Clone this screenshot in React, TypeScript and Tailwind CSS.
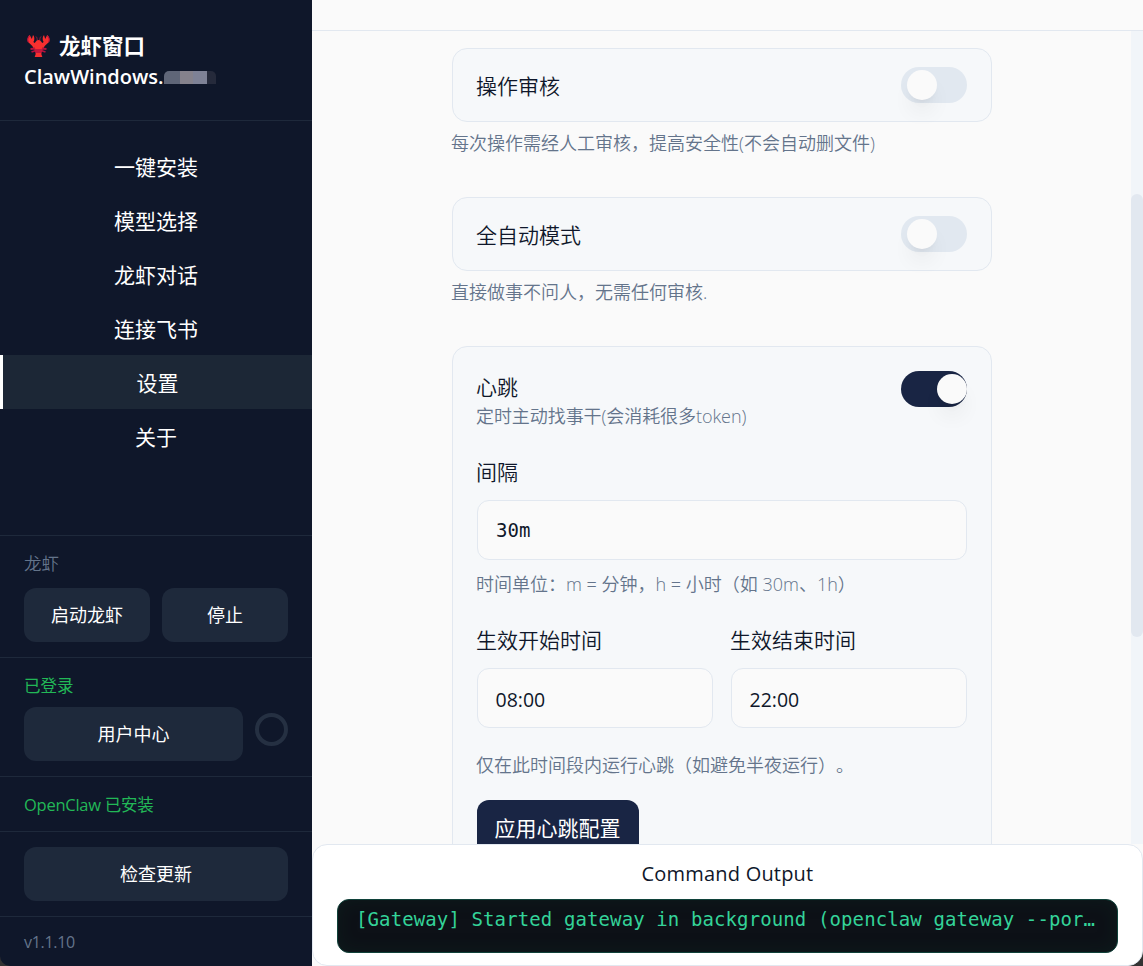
import React from 'react';

const SANS = "font-['Open_Sans','Noto_Sans_CJK_SC',sans-serif]";
const MONO = "font-['DejaVu_Sans_Mono',monospace]";

const navItems = ['一键安装', '模型选择', '龙虾对话', '连接飞书', '设置', '关于'];
const activeItem = '设置';

function Lobster() {
  return (
    <svg viewBox="0 0 24 24" className="h-[24px] w-[24px] shrink-0" fill="none">
      <path d="M10.300 8C10.300 5 10 3 9 2.500M12.700 8C12.700 5 13 3 14 2.500" stroke="#8f1d3c" strokeWidth="1" />
      <path d="M3.500 15l5-.500M19.500 15l-5-.500M4.500 18l4.500-1.500M18.500 18l-4.500-1.500" stroke="#b5123f" strokeWidth="1.800" />
      <path d="M2.800 1C.5 2.500-.3 6.500 1.500 8.500c1.500 1.500 3.500 2.500 5 5.500l3-3.500C8.500 9 7 9 6.400 8 7.800 6 7.600 2.500 6 1L4.800 5z" fill="#f92f2f" />
      <path d="M20.200 1c2.300 1.500 3.100 5.500 1.300 7.500-1.500 1.500-3.500 2.500-5 5.500l-3-3.500c1-1.500 2.500-1.500 3.100-2.500C15.200 6 15.400 2.500 17 1l1.200 4z" fill="#f92f2f" />
      <path d="M2.600 1.800C.7 3.500.2 6.500 1.500 8.200M20.400 1.800c1.900 1.700 2.400 4.700 1.100 6.400" stroke="#b5123f" strokeWidth="1.100" />
      <path d="M11.500 6c2.200 0 4.500 3.200 4.500 6.500 0 2-2 3.500-4.500 3.500S7 14.500 7 12.500C7 9.200 9.300 6 11.500 6z" fill="#f92f2f" />
      <path d="M7.200 15h8.600l-1.500 5H8.700z" fill="#c4173c" />
      <path d="M9 19h5l1.300 4H7.700z" fill="#f92f2f" />
    </svg>
  );
}

function SideButton({ children, className = '' }: { children: React.ReactNode; className?: string }) {
  return (
    <button className={`flex h-[54px] items-center justify-center rounded-[12px] bg-[#1e293b] text-[18px] text-white ${className}`}>
      {children}
    </button>
  );
}

function Toggle({ on = false }: { on?: boolean }) {
  return (
    <span className={`flex h-9 w-[66px] shrink-0 items-center rounded-full ${on ? 'justify-end bg-[#192544]' : 'bg-[#e1e8f0] pl-[6px]'}`}>
      <span className="h-[30px] w-[30px] rounded-full bg-[#fafafa] shadow-[0_15px_22px_-4px_rgba(0,0,0,0.07),0_6px_9px_-6px_rgba(0,0,0,0.1)]" />
    </span>
  );
}

function ToggleCard({ title }: { title: string }) {
  return (
    <div className="flex h-[74px] shrink-0 items-center justify-between rounded-[15px] border border-[#e2e8f0] bg-[#f6f8fa] pl-[23px] pr-6">
      <span className="pt-[3px] text-[21px] font-[350]">{title}</span>
      <Toggle />
    </div>
  );
}

function Field({ value, className = '' }: { value: string; className?: string }) {
  return (
    <div className={`flex h-[60px] items-center rounded-[12px] border border-[#e2e8f0] bg-[#fafafa] px-[18px] ${className}`}>
      {value}
    </div>
  );
}

function Sidebar() {
  return (
    <aside className="flex w-[312px] shrink-0 flex-col rounded-bl-[10px] bg-[#0f172a] text-white">
      <div className="h-[121px] border-b border-[#1e293b] px-6 pt-[31px] font-semibold leading-[30px]">
        <div className="flex items-center">
          <span className="flex w-[35px] pl-[3px]"><Lobster /></span>
          <span className="text-[21.500px] font-bold">龙虾窗口</span>
        </div>
        <div className="flex items-center">
          <span className="pt-px text-[20px]">ClawWindows.</span>
          <span className="mt-px flex h-[13px] w-[52px] overflow-hidden rounded-t-[5px]">
            <span className="w-[16px] bg-[#5f6678]" />
            <span className="w-[13px] bg-[#85828c]" />
            <span className="w-[14px] bg-[#7e8296]" />
            <span className="w-[9px] bg-[#252a3b]" />
          </span>
        </div>
      </div>
      <nav className="flex h-[414px] flex-col pt-[18px] text-[21px]">
        {navItems.map((item) => (
          <a
            key={item}
            className={`flex h-[54px] items-center justify-center pt-[3px] ${item === activeItem ? 'border-l-[3px] border-white bg-[#1c2736]' : ''}`}
          >
            {item}
          </a>
        ))}
      </nav>
      <section className="h-[122px] border-t border-[#1e293b] px-6 pt-[14px]">
        <div className="h-[38px] text-[17.500px] font-[350] leading-[27px] text-[#64748b]">龙虾</div>
        <div className="grid grid-cols-2 gap-3">
          <SideButton>启动龙虾</SideButton>
          <SideButton>停止</SideButton>
        </div>
      </section>
      <section className="h-[119px] border-t border-[#1e293b] px-6 pt-[14px]">
        <div className="h-[35px] text-[16.500px] leading-[28px] text-[#22b857]">已登录</div>
        <div className="flex gap-3">
          <SideButton className="w-[219px]">用户中心</SideButton>
          <span className="mt-[6px] h-[33px] w-[33px] rounded-full border-4 border-[#253042]" />
        </div>
      </section>
      <section className="flex h-[55px] items-center border-t border-[#1e293b] px-6 pt-[2px] text-[16.500px] text-[#22b857]">
        <span className="tracking-[-0.250px]">OpenClaw 已安装</span>
      </section>
      <section className="h-[85px] border-t border-[#1e293b] px-6 pt-[15px]">
        <SideButton className="w-full">检查更新</SideButton>
      </section>
      <section className="flex h-[50px] items-center border-t border-[#1e293b] px-6 text-[16px] tracking-[-0.300px] text-[#64748b]">v1.1.10</section>
    </aside>
  );
}

function HeartbeatCard() {
  return (
    <section className="flex h-[560px] shrink-0 flex-col rounded-[15px] border border-[#e2e8f0] bg-[#f6f8fa] px-6 pt-[24px] text-[21px] font-[350]">
      <div className="flex h-[88px] justify-between">
        <div className="-ml-px">
          <div className="h-[32px] leading-[32px]">心跳</div>
          <div className="text-[18px] leading-[27px] tracking-[-0.070px] text-[#64748b]">定时主动找事干(会消耗很多token)</div>
        </div>
        <Toggle on />
      </div>
      <div className="-ml-px h-[41px] leading-[26px]">间隔</div>
      <Field value="30m" className={`pt-px text-[19px] font-normal ${MONO}`} />
      <div className="-ml-px mt-[11px] h-[28px] text-[18px] leading-[27px] text-[#64748b]">时间单位：m = 分钟，h = 小时（如 30m、1h）</div>
      <div className="mt-[28px] grid grid-cols-2 gap-[18px]">
        <div>
          <div className="-ml-px h-[41px] leading-[26px]">生效开始时间</div>
          <Field value="08:00" className="pl-[17.500px] pt-[3px] text-[19.500px] font-[380]" />
        </div>
        <div>
          <div className="-ml-px h-[41px] leading-[26px]">生效结束时间</div>
          <Field value="22:00" className="pl-[17.500px] pt-[3px] text-[19.500px] font-[380]" />
        </div>
      </div>
      <div className="-ml-px mt-[23px] h-[28px] text-[18px] leading-[28px] text-[#64748b] [text-spacing-trim:space-all]">仅在此时间段内运行心跳（如避免半夜运行）。</div>
      <button className="mt-[21px] h-[57px] w-[162px] rounded-[12px] bg-[#192544] pr-px font-normal text-white">应用心跳配置</button>
    </section>
  );
}

function CommandOutput() {
  return (
    <div className="bg-[linear-gradient(to_right,#fafafa_50%,transparent_50%),linear-gradient(to_bottom,#fafafa_50%,#333333_50%)]">
      <section className="flex h-[122px] flex-col rounded-[15px] border border-[#e2e8f0] bg-white px-6">
        <h2 className="h-[54px] text-center text-[20px] font-medium leading-[57px] tracking-[0.200px]">Command Output</h2>
        <div className={`h-[54px] truncate rounded-[12px] border border-[#10423a] bg-[#0d1117] pl-[18px] pr-[19px] text-[19px] leading-[39px] tracking-[0.110px] text-[#34d399] shadow-[inset_0_0_18px_rgba(16,60,45,0.25)] ${MONO}`}>
          [Gateway] Started gateway in background (openclaw gateway --por…
        </div>
      </section>
    </div>
  );
}

export default function App() {
  return (
    <div className={`flex h-[966px] w-[1143px] overflow-hidden bg-[#333333] text-[#0f172a] ${SANS}`}>
      <Sidebar />
      <main className="flex min-w-0 flex-1 flex-col">
        <header className="h-[31px] shrink-0 border-b border-[#e2e8f0] bg-[#fafafa]" />
        <div className="flex h-[813px] shrink-0 overflow-hidden bg-[#fafafa]">
          <div className="flex h-[813px] flex-1 flex-col overflow-hidden pl-[140px] pr-[139px] pt-[17px]">
            <ToggleCard title="操作审核" />
            <p className="-ml-px mt-[7px] h-[68px] shrink-0 whitespace-nowrap text-[18px] font-[350] leading-[28px] text-[#64748b]">每次操作需经人工审核，提高安全性(不会自动删文件)</p>
            <ToggleCard title="全自动模式" />
            <p className="-ml-px mt-[7px] h-[68px] shrink-0 whitespace-nowrap text-[18px] font-[350] leading-[28px] text-[#64748b]">直接做事不问人，无需任何审核.</p>
            <HeartbeatCard />
          </div>
          <div className="w-3 bg-[#f1f5f9] pt-[163px]">
            <div className="h-[443px] rounded-full bg-[#e2e8f0]" />
          </div>
        </div>
        <CommandOutput />
      </main>
    </div>
  );
}
